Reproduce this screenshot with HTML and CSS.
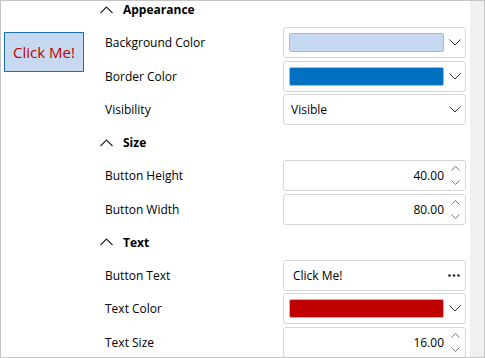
FILE: index.html
```html
<!DOCTYPE html>
<html lang="en">
<head>
    <meta charset="UTF-8">
    <title>Property Grid</title>
    <link rel="stylesheet" href="styles.css">
</head>
<body>
    <div class="frame">
        <div class="preview">
            <button class="sample">Click Me!</button>
        </div>

        <div class="grid">
            <div class="list">
                <div class="row header">
                    <svg class="expander" width="13" height="8" viewBox="0 0 13 8"><path d="M0.5 7 L6.5 1 L12.5 7" fill="none" stroke="#222" stroke-width="1.1"/></svg>
                    <span>Appearance</span>
                </div>
                <div class="row">
                    <span class="label">Background Color</span>
                    <div class="editor">
                        <span class="swatch" style="background-color: #c6d9f1;"></span>
                        <svg class="drop" width="12" height="7" viewBox="0 0 12 7"><path d="M0.5 0.5 L6 6 L11.5 0.5" fill="none" stroke="#333" stroke-width="1"/></svg>
                    </div>
                </div>
                <div class="row">
                    <span class="label">Border Color</span>
                    <div class="editor">
                        <span class="swatch" style="background-color: #0070c0;"></span>
                        <svg class="drop" width="12" height="7" viewBox="0 0 12 7"><path d="M0.5 0.5 L6 6 L11.5 0.5" fill="none" stroke="#333" stroke-width="1"/></svg>
                    </div>
                </div>
                <div class="row">
                    <span class="label">Visibility</span>
                    <div class="editor">
                        <span class="value">Visible</span>
                        <svg class="drop" width="12" height="7" viewBox="0 0 12 7"><path d="M0.5 0.5 L6 6 L11.5 0.5" fill="none" stroke="#333" stroke-width="1"/></svg>
                    </div>
                </div>

                <div class="row header">
                    <svg class="expander" width="13" height="8" viewBox="0 0 13 8"><path d="M0.5 7 L6.5 1 L12.5 7" fill="none" stroke="#222" stroke-width="1.1"/></svg>
                    <span>Size</span>
                </div>
                <div class="row">
                    <span class="label">Button Height</span>
                    <div class="editor">
                        <span class="number">40.00</span>
                        <span class="spin">
                            <svg width="9" height="5" viewBox="0 0 9 5"><path d="M0.5 4.5 L4.5 0.5 L8.5 4.5" fill="none" stroke="#777" stroke-width="1"/></svg>
                            <svg width="9" height="5" viewBox="0 0 9 5"><path d="M0.5 0.5 L4.5 4.5 L8.5 0.5" fill="none" stroke="#777" stroke-width="1"/></svg>
                        </span>
                    </div>
                </div>
                <div class="row">
                    <span class="label">Button Width</span>
                    <div class="editor">
                        <span class="number">80.00</span>
                        <span class="spin">
                            <svg width="9" height="5" viewBox="0 0 9 5"><path d="M0.5 4.5 L4.5 0.5 L8.5 4.5" fill="none" stroke="#777" stroke-width="1"/></svg>
                            <svg width="9" height="5" viewBox="0 0 9 5"><path d="M0.5 0.5 L4.5 4.5 L8.5 0.5" fill="none" stroke="#777" stroke-width="1"/></svg>
                        </span>
                    </div>
                </div>

                <div class="row header">
                    <svg class="expander" width="13" height="8" viewBox="0 0 13 8"><path d="M0.5 7 L6.5 1 L12.5 7" fill="none" stroke="#222" stroke-width="1.1"/></svg>
                    <span>Text</span>
                </div>
                <div class="row">
                    <span class="label">Button Text</span>
                    <div class="editor">
                        <span class="value text">Click Me!</span>
                        <svg class="more" width="12" height="3" viewBox="0 0 12 3"><circle cx="1.5" cy="1.5" r="1.3" fill="#222"/><circle cx="6" cy="1.5" r="1.3" fill="#222"/><circle cx="10.5" cy="1.5" r="1.3" fill="#222"/></svg>
                    </div>
                </div>
                <div class="row">
                    <span class="label">Text Color</span>
                    <div class="editor">
                        <span class="swatch" style="background-color: #c00000;"></span>
                        <svg class="drop" width="12" height="7" viewBox="0 0 12 7"><path d="M0.5 0.5 L6 6 L11.5 0.5" fill="none" stroke="#333" stroke-width="1"/></svg>
                    </div>
                </div>
                <div class="row">
                    <span class="label">Text Size</span>
                    <div class="editor">
                        <span class="number">16.00</span>
                        <span class="spin">
                            <svg width="9" height="5" viewBox="0 0 9 5"><path d="M0.5 4.5 L4.5 0.5 L8.5 4.5" fill="none" stroke="#777" stroke-width="1"/></svg>
                            <svg width="9" height="5" viewBox="0 0 9 5"><path d="M0.5 0.5 L4.5 4.5 L8.5 0.5" fill="none" stroke="#777" stroke-width="1"/></svg>
                        </span>
                    </div>
                </div>
            </div>
        </div>

        <div class="scrollbar"></div>
    </div>
</body>
</html>
```

FILE: styles.css
```css
body {
    margin: 0;
    background-color: #ffffff;
    font-family: "Open Sans", "Noto Sans", sans-serif;
    font-size: 12px;
    color: #000000;
}

.frame {
    box-sizing: border-box;
    width: 485px;
    height: 358px;
    border: 1px solid #c4c4c4;
    display: flex;
    overflow: hidden;
}

/* Preview of the edited button */
.preview {
    width: 87px;
    flex-shrink: 0;
}

.sample {
    box-sizing: border-box;
    width: 80px;
    height: 40px;
    margin: 31px 0 0 3px;
    padding: 0;
    background-color: #c6d9f1;
    border: 1px solid #1f6fb5;
    border-radius: 0;
    color: #c00000;
    font-family: "Open Sans", "Noto Sans", sans-serif;
    font-size: 15px;
}

/* Property grid */
.grid {
    width: 381px;
    flex-shrink: 0;
    overflow: hidden;
}

.list {
    margin-top: -8px;
}

.row {
    height: 33.25px;
    display: flex;
    align-items: center;
    padding-left: 17px;
}

.row.header {
    padding-left: 12px;
    gap: 10px;
    font-weight: bold;
}

.label {
    width: 178px;
    flex-shrink: 0;
}

.editor {
    box-sizing: border-box;
    width: 183px;
    height: 31px;
    border: 1px solid #d6d6d6;
    border-radius: 3px;
    display: flex;
    align-items: center;
    padding: 0 4px 0 5px;
}

.swatch {
    box-sizing: border-box;
    width: 155px;
    height: 19px;
    border: 1px solid #b8b8b8;
    border-radius: 2px;
}

.drop {
    margin-left: auto;
}

.value {
    flex: 1;
    padding-left: 2px;
}

.value.text {
    padding-left: 4px;
}

.more {
    margin-right: 1px;
}

.number {
    width: 155px;
    text-align: right;
}

.spin {
    margin-left: auto;
    margin-right: 1px;
    display: flex;
    flex-direction: column;
    gap: 9px;
}

.spin svg {
    display: block;
}

.scrollbar {
    width: 15px;
    margin-left: 1px;
    background-color: #f0f0f0;
}
```
